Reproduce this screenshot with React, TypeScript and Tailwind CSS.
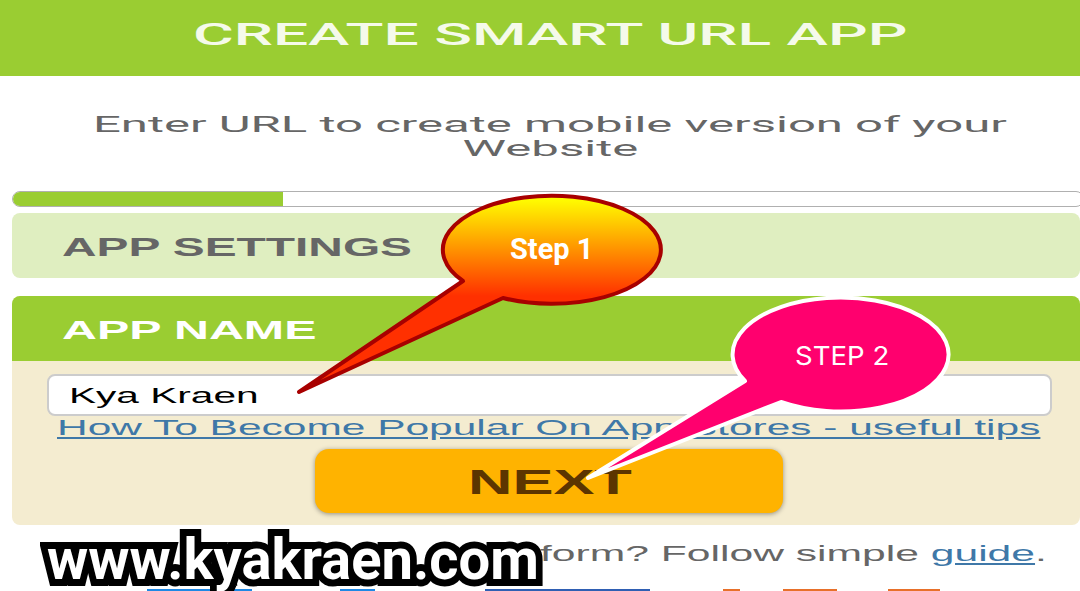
import React from 'react';

function Stretch({ children, className }: { children: React.ReactNode; className?: string }) {
  return <span className={`inline-block origin-left whitespace-nowrap ${className ?? ''}`}>{children}</span>;
}

function Callouts() {
  return (
    <svg className="absolute inset-0 pointer-events-none" width="1080" height="591" viewBox="0 0 1080 591">
      <defs>
        <linearGradient id="step1" gradientUnits="userSpaceOnUse" x1="0" y1="198" x2="0" y2="296">
          <stop offset="0" stopColor="#ffff00" />
          <stop offset="1" stopColor="#ff3000" />
        </linearGradient>
      </defs>
      <path
        d="M299 392 L463 281 A109 54 0 1 1 503 298 Z"
        fill="url(#step1)"
        stroke="#a80000"
        strokeWidth="4"
        strokeLinejoin="round"
      />
      <path
        d="M588 478 L745 381 A108 57 0 1 1 781 402 Z"
        fill="#ff006e"
        stroke="#ffffff"
        strokeWidth="4"
        strokeLinejoin="round"
      />
    </svg>
  );
}

export default function App() {
  return (
    <div className="relative w-[1080px] h-[591px] overflow-hidden bg-white font-['Liberation_Sans',sans-serif]">
      <div className="h-[76px] bg-[#9acd32] flex items-center pl-[193px] pb-[6px]">
        <Stretch className="text-white/90 text-[31px] font-medium font-['Roboto',sans-serif] scale-x-[2.01]">CREATE SMART URL APP</Stretch>
      </div>

      <div className="h-[115px] pt-[37px] pl-[20px] flex flex-col items-center text-[#666] text-[22px] leading-[24px] font-['Roboto',sans-serif]">
        <span className="inline-block scale-x-[2.23] whitespace-nowrap">Enter URL to create mobile version of your</span>
        <span className="inline-block scale-x-[2.23] whitespace-nowrap">Website</span>
      </div>

      <div className="ml-[12px] w-[1072px] h-[16px] border-[1.5px] border-[#b0b0b0] rounded-[8px] bg-white overflow-hidden">
        <div className="w-[270px] h-full bg-[#9acd32]" />
      </div>

      <div className="ml-[12px] mt-[6px] h-[65px] bg-[#dfeec0] rounded-[8px] flex items-center pl-[50px] pt-[3px]">
        <Stretch className="text-[#666] text-[26px] font-bold scale-x-[1.84]">APP SETTINGS</Stretch>
      </div>

      <div className="ml-[12px] mt-[18px] h-[229px] bg-[#f4ecd0] rounded-[8px] overflow-hidden">
        <div className="h-[65px] bg-[#9acd32] flex items-center pl-[50px] pt-[3px]">
          <Stretch className="text-white text-[26px] font-bold scale-x-[1.86]">APP NAME</Stretch>
        </div>
        <div className="mt-[13px] ml-[35px] w-[1005px] h-[42px] bg-white border-2 border-[#ccc] rounded-[8px] flex items-center pl-[20px]">
          <Stretch className="text-black text-[22px] scale-x-[1.845]">Kya Kraen</Stretch>
        </div>
        <div className="ml-[45px] h-[24px] leading-[24px]">
          <Stretch className="text-[#3f78a8] text-[22px] underline scale-x-[1.93]">How To Become Popular On App Stores - useful tips</Stretch>
        </div>
        <div className="mt-[9px] ml-[303px] w-[468px] h-[64px] bg-[#ffb300] rounded-[14px] shadow-[0_1px_5px_rgba(0,0,0,0.4)] flex items-center pl-[153px] pt-[2px]">
          <Stretch className="text-[#5c3500] text-[35px] font-bold scale-x-[1.756]">NEXT</Stretch>
        </div>
      </div>

      <div className="mt-[16px] ml-[540px] h-[26px] leading-[26px] text-[#666] text-[22px]">
        <Stretch className="scale-x-[1.937]">form? Follow simple <span className="text-[#3f78a8] underline">guide</span>.</Stretch>
      </div>

      {/* logo row cut off at the bottom edge */}
      <div className="mt-[22px] ml-[147px] flex h-[3px]">
        <div className="w-[105px] bg-[#1e88e5]" />
        <div className="ml-[88px] w-[35px] bg-[#1e88e5]" />
        <div className="ml-[110px] w-[165px] bg-[#2f5fb3]" />
        <div className="ml-[73px] w-[17px] bg-[#e8702a]" />
        <div className="ml-[43px] w-[54px] bg-[#e8702a]" />
        <div className="ml-[51px] w-[52px] bg-[#e8702a]" />
      </div>

      <Callouts />

      <div className="absolute left-[510px] top-[231px] text-white text-[29px] font-bold font-['Roboto',sans-serif] leading-[36px] origin-left whitespace-nowrap">
        Step 1
      </div>
      <div className="absolute left-[795px] top-[340px] text-white text-[26px] leading-[32px] font-['Inter',sans-serif] scale-x-[1.06] origin-left whitespace-nowrap">
        STEP 2
      </div>

      <div className="absolute left-[47px] top-[527px] text-white text-[58px] font-bold font-['Roboto',sans-serif] leading-[64px] scale-x-[0.968] origin-left whitespace-nowrap [-webkit-text-stroke:14px_#000] [paint-order:stroke_fill]">
        www.kyakraen.com
      </div>
    </div>
  );
}
